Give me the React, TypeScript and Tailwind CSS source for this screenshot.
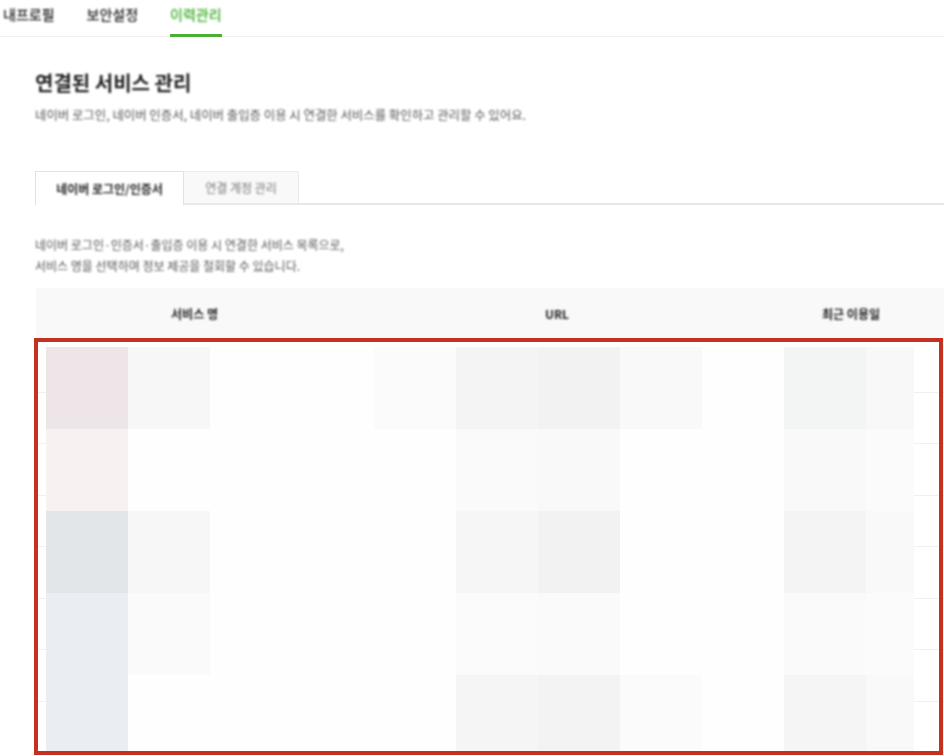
import React from 'react';

// 모자이크 셀 색상 (5행 11열)
const mosaic: string[][] = [
  ['bg-[#eee5e9]', 'bg-[#f7f7f7]', 'bg-[#fefefe]', 'bg-[#fefefe]', 'bg-[#fbfbfb]', 'bg-[#f4f4f4]', 'bg-[#f2f2f2]', 'bg-[#f9f9f9]', 'bg-[#fefefe]', 'bg-[#f3f5f5]', 'bg-[#f8f8f8]'],
  ['bg-[#f7f1f1]', 'bg-[#fefefe]', 'bg-[#fefefe]', 'bg-[#fefefe]', 'bg-[#fefefe]', 'bg-[#fafafa]', 'bg-[#f9f9f9]', 'bg-[#fefefe]', 'bg-[#fefefe]', 'bg-[#f9f9f9]', 'bg-[#fbfbfb]'],
  ['bg-[#e2e6e9]', 'bg-[#f7f7f7]', 'bg-[#fefefe]', 'bg-[#fefefe]', 'bg-[#fefefe]', 'bg-[#f6f6f6]', 'bg-[#f2f2f2]', 'bg-[#fefefe]', 'bg-[#fefefe]', 'bg-[#f4f4f4]', 'bg-[#f9f9f9]'],
  ['bg-[#eaedf2]', 'bg-[#fafafa]', 'bg-[#fefefe]', 'bg-[#fefefe]', 'bg-[#fefefe]', 'bg-[#fbfbfb]', 'bg-[#fafafa]', 'bg-[#fefefe]', 'bg-[#fefefe]', 'bg-[#fafafa]', 'bg-[#fbfbfb]'],
  ['bg-[#eaedf2]', 'bg-[#fefefe]', 'bg-[#fefefe]', 'bg-[#fefefe]', 'bg-[#fefefe]', 'bg-[#f5f5f5]', 'bg-[#f3f3f3]', 'bg-[#fbfbfb]', 'bg-[#fefefe]', 'bg-[#f5f5f5]', 'bg-[#f9f9f9]'],
];

const rowKeys = [0, 1, 2, 3, 4, 5, 6, 7];

export default function App() {
  return (
    <div className="h-[756px] w-[944px] overflow-hidden bg-white font-['Noto_Sans_CJK_KR','Noto_Sans',sans-serif]">
      {/* 상단 메뉴 */}
      <nav className="flex h-[37px] gap-[32px] border-b border-[#f0f0f0] pl-[3px] text-[14px] font-medium text-[#222]">
        <a className="pt-[5px] leading-[18px] blur-[0.8px]">내프로필</a>
        <a className="pt-[5px] leading-[18px] blur-[0.8px]">보안설정</a>
        <a className="h-[37px] border-b-[3px] border-[#4caf35] pt-[5px] leading-[18px] text-[#3dab28]">
          <div className="blur-[0.8px]">이력관리</div>
        </a>
      </nav>

      <div className="pl-[35px]">
        <h1 className="mt-[33px] text-[20px] leading-[26px] font-bold text-[#222] blur-[0.8px]">연결된 서비스 관리</h1>
        <p className="mt-[11px] text-[12.4px] leading-[16px] text-[#555] blur-[0.8px]">
          네이버 로그인, 네이버 인증서, 네이버 출입증 이용 시 연결한 서비스를 확인하고 관리할 수 있어요.
        </p>

        {/* 탭 */}
        <div className="mt-[48px] flex h-[34px] border-b-2 border-[#e8e8e8]">
          <div className="z-10 -mb-[2px] flex h-[34px] w-[149px] items-center justify-center border-x border-t border-[#e2e2e2] bg-white text-[12px] font-bold text-[#222]">
            <div className="blur-[0.8px]">네이버 로그인/인증서</div>
          </div>
          <div className="flex h-[32px] w-[115px] items-center justify-center border-t border-r border-[#ececec] bg-[#f9f9f9] text-[12px] text-[#777]">
            <div className="blur-[0.8px]">연결 계정 관리</div>
          </div>
        </div>

        <p className="mt-[29px] text-[12px] leading-[21px] text-[#555] blur-[0.8px]">
          네이버 로그인·인증서·출입증 이용 시 연결한 서비스 목록으로,
          <br />
          서비스 명을 선택하며 정보 제공을 철회할 수 있습니다.
        </p>

        {/* 표 */}
        <div className="relative mt-[12px] ml-px">
          <div className="grid h-[50px] grid-cols-[317px_408px_180px] items-center bg-[#f9f9f9] pt-[2px] text-center text-[12px] font-bold text-[#222]">
            <div className="blur-[0.8px]">서비스 명</div>
            <div className="blur-[0.8px]">URL</div>
            <div className="blur-[0.8px]">최근 이용일</div>
          </div>
          <div className="pt-[3px]">
            {rowKeys.map((row) => (
              <div key={row} className="h-[51.5px] border-b border-[#f0f0f0]" />
            ))}
          </div>

          {/* 가림 처리 영역 */}
          <div className="absolute top-[50px] -left-[2px] h-[417px] w-[909px] border-4 border-[#c5301f] pt-[5px] pl-[8px]">
            <div className="grid grid-cols-[repeat(10,82px)_48px] grid-rows-[repeat(4,82px)_76px]">
              {mosaic.flat().map((color, i) => (
                <div key={i} className={color} />
              ))}
            </div>
          </div>
        </div>
      </div>
    </div>
  );
}
